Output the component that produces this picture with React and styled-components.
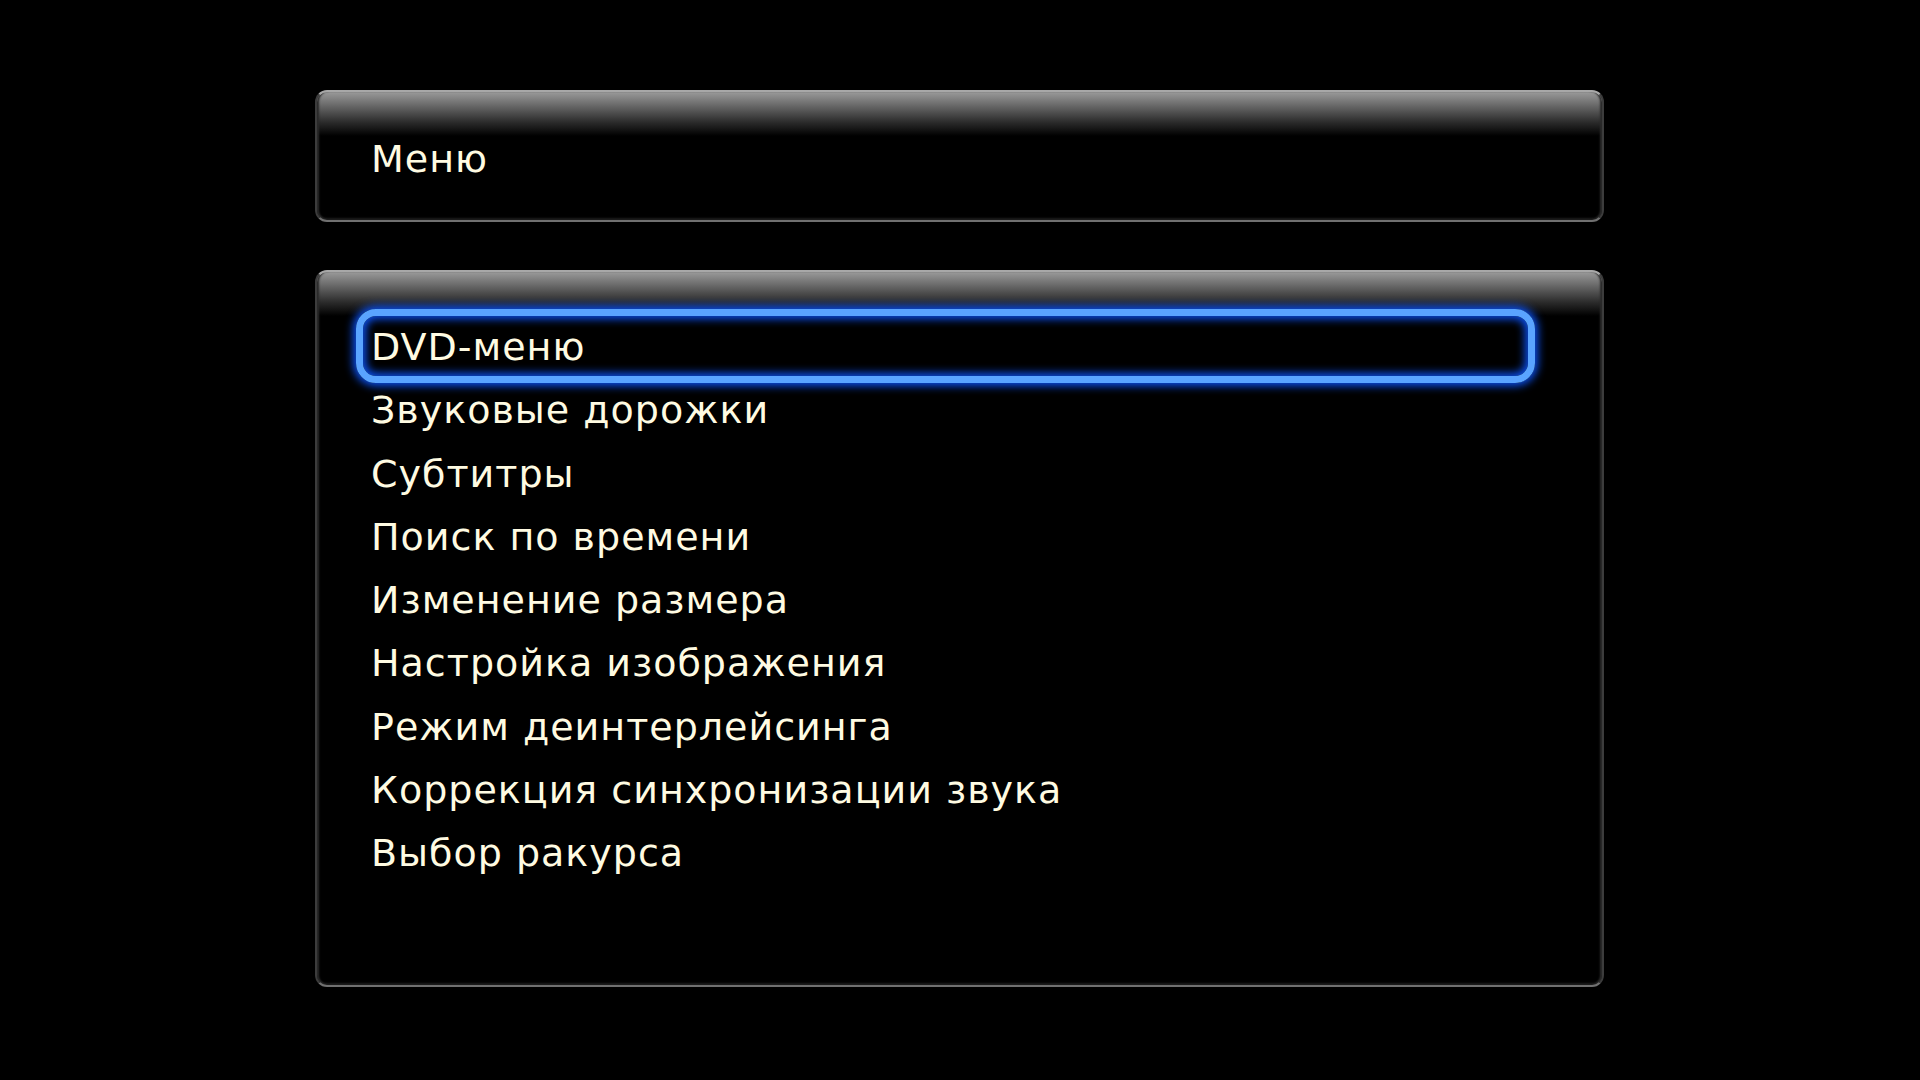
import React from "react";
import styled, { createGlobalStyle } from "styled-components";

const items = [
  "DVD-меню",
  "Звуковые дорожки",
  "Субтитры",
  "Поиск по времени",
  "Изменение размера",
  "Настройка изображения",
  "Режим деинтерлейсинга",
  "Коррекция синхронизации звука",
  "Выбор ракурса",
];

const GlobalStyle = createGlobalStyle`
  html, body {
    margin: 0;
    background: #000;
  }
  body {
    font-family: "DejaVu Sans", Verdana, sans-serif;
  }
`;

const Screen = styled.div`
  width: 1920px;
  height: 1080px;
  background: #000;
  padding: 90px 0 0 315px;
  box-sizing: border-box;
  display: flex;
  flex-direction: column;
  gap: 48px;
`;

// панель со стеклянным бликом сверху
const Panel = styled.div`
  width: 1289px;
  height: ${(p) => p.h}px;
  box-sizing: border-box;
  border-radius: 12px;
  border: 2px solid #3c3c3c;
  border-top-color: #a8a8a8;
  border-bottom-color: #707070;
  background: linear-gradient(
    to bottom,
    #9a9a9a 0px,
    #6e6e6e 12px,
    #2c2c2c 30px,
    #000 44px
  );
  box-shadow: inset 3px 0 2px -1px #2a2a2a, inset -3px 0 2px -1px #2a2a2a,
    inset 0 -3px 2px -1px #1c1c1c;
`;

const Header = styled(Panel)`
  display: flex;
  align-items: center;
  padding: 5px 0 0 54px;
`;

const Title = styled.div`
  font-size: 38px;
  letter-spacing: 1px;
  color: #fffbe2;
`;

const List = styled.div`
  display: flex;
  flex-direction: column;
  padding: 44px 67px 0 54px;
`;

const Item = styled.div`
  position: relative;
  height: 63.3px;
  line-height: 63.3px;
  font-size: 38px;
  letter-spacing: 1px;
  color: #fffbe2;
  white-space: nowrap;

  ${(p) =>
    p.active &&
    `
    &::before {
      content: "";
      position: absolute;
      top: -7px;
      bottom: -4px;
      left: -15px;
      right: 0;
      border: 7px solid #5aa4ff;
      border-radius: 20px;
      box-shadow: 0 0 8px 3px #0b50f0, inset 0 0 8px 3px #0b50f0;
    }
  `}
`;

const Label = styled.span`
  position: relative;
`;

export default function App() {
  return (
    <>
      <GlobalStyle />
      <Screen>
        <Header h={132}>
          <Title>Меню</Title>
        </Header>
        <Panel h={717}>
          <List>
            {items.map((t, i) => (
              <Item key={t} active={i === 0}>
                <Label>{t}</Label>
              </Item>
            ))}
          </List>
        </Panel>
      </Screen>
    </>
  );
}
